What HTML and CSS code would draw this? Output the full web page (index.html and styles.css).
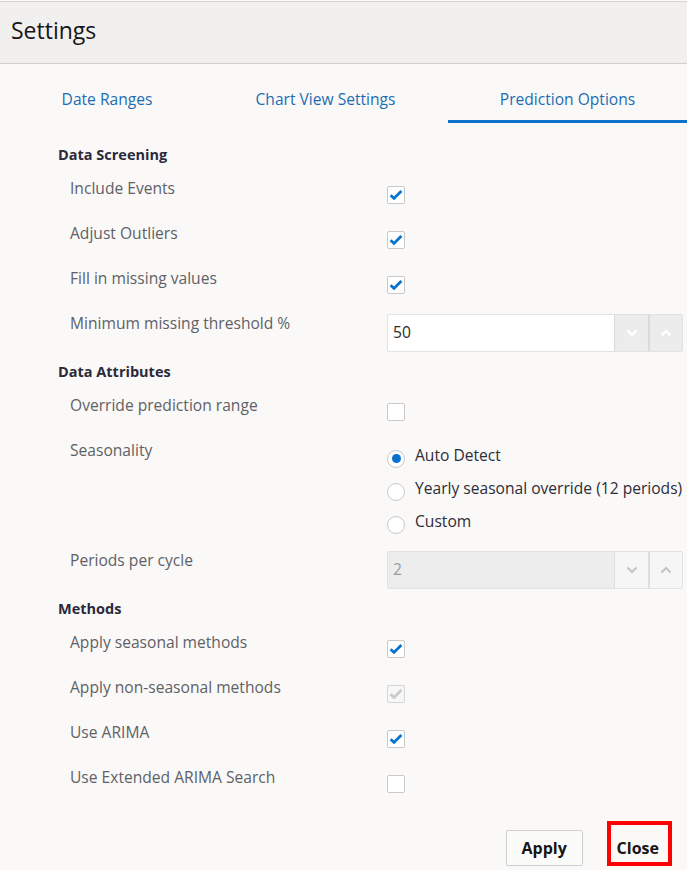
FILE: index.html
```html
<!DOCTYPE html>
<html lang="en">
<head>
<meta charset="utf-8">
<title>Settings</title>
<link rel="stylesheet" href="styles.css">
</head>
<body>
<div class="dialog">
  <header class="titlebar"><h1 class="title">Settings</h1></header>

  <nav class="tabs">
    <a class="tab tab-dates">Date Ranges</a>
    <a class="tab tab-chart">Chart View Settings</a>
    <a class="tab tab-pred active">Prediction Options</a>
  </nav>

  <main class="content">
    <section class="group">
      <h2 class="group-title">Data Screening</h2>
      <div class="row">
        <span class="label">Include Events</span>
        <span class="cb"><svg viewBox="0 0 16 16"><path d="M2.6 8.2 L6 11.4 L13.4 4"/></svg></span>
      </div>
      <div class="row">
        <span class="label">Adjust Outliers</span>
        <span class="cb"><svg viewBox="0 0 16 16"><path d="M2.6 8.2 L6 11.4 L13.4 4"/></svg></span>
      </div>
      <div class="row">
        <span class="label">Fill in missing values</span>
        <span class="cb"><svg viewBox="0 0 16 16"><path d="M2.6 8.2 L6 11.4 L13.4 4"/></svg></span>
      </div>
      <div class="row row-input">
        <span class="label">Minimum missing threshold %</span>
        <div class="spin">
          <span class="spin-value">50</span>
          <span class="spin-btn"><svg viewBox="0 0 12 8"><path d="M1.5 1.5 L6 6 L10.5 1.5"/></svg></span>
          <span class="spin-btn"><svg viewBox="0 0 12 8"><path d="M1.5 6.5 L6 2 L10.5 6.5"/></svg></span>
        </div>
      </div>
    </section>

    <section class="group">
      <h2 class="group-title">Data Attributes</h2>
      <div class="row">
        <span class="label">Override prediction range</span>
        <span class="cb"></span>
      </div>
      <div class="row row-radios">
        <span class="label">Seasonality</span>
        <div class="radios">
          <div class="radio-item"><span class="radio selected"></span><span class="radio-text">Auto Detect</span></div>
          <div class="radio-item"><span class="radio"></span><span class="radio-text">Yearly seasonal override (12 periods)</span></div>
          <div class="radio-item"><span class="radio"></span><span class="radio-text">Custom</span></div>
        </div>
      </div>
      <div class="row row-input">
        <span class="label">Periods per cycle</span>
        <div class="spin disabled">
          <span class="spin-value">2</span>
          <span class="spin-btn"><svg viewBox="0 0 12 8"><path d="M1.5 1.5 L6 6 L10.5 1.5"/></svg></span>
          <span class="spin-btn"><svg viewBox="0 0 12 8"><path d="M1.5 6.5 L6 2 L10.5 6.5"/></svg></span>
        </div>
      </div>
    </section>

    <section class="group">
      <h2 class="group-title">Methods</h2>
      <div class="row">
        <span class="label">Apply seasonal methods</span>
        <span class="cb"><svg viewBox="0 0 16 16"><path d="M2.6 8.2 L6 11.4 L13.4 4"/></svg></span>
      </div>
      <div class="row">
        <span class="label">Apply non-seasonal methods</span>
        <span class="cb disabled"><svg viewBox="0 0 16 16"><path d="M2.6 8.2 L6 11.4 L13.4 4"/></svg></span>
      </div>
      <div class="row">
        <span class="label">Use ARIMA</span>
        <span class="cb"><svg viewBox="0 0 16 16"><path d="M2.6 8.2 L6 11.4 L13.4 4"/></svg></span>
      </div>
      <div class="row">
        <span class="label">Use Extended ARIMA Search</span>
        <span class="cb"></span>
      </div>
    </section>
  </main>

  <footer class="footer">
    <button class="btn btn-apply">Apply</button>
    <button class="btn btn-close">Close<span class="highlight"></span></button>
  </footer>
</div>
</body>
</html>
```

FILE: styles.css
```css
* { box-sizing: border-box; }

html, body {
  margin: 0;
  padding: 0;
  background: #faf9f8;
}

body {
  font-family: "Open Sans", "Noto Sans", sans-serif;
  color: #5f6064;
}

.dialog {
  width: 687px;
  height: 870px;
  overflow: hidden;
  background: #faf9f8;
}

.titlebar {
  margin-top: 1px;
  height: 63px;
  background: #f1f0ef;
  border-top: 1px solid #d3d3d3;
  border-bottom: 1px solid #d0d0d0;
  padding: 13px 0 0 11px;
}

.title {
  margin: 0;
  font-size: 23px;
  font-weight: 400;
  color: #161616;
  line-height: 30px;
}

.tabs {
  display: flex;
  padding-left: 7px;
  padding-top: 24px;
}

.tab {
  display: block;
  text-align: center;
  font-size: 15.6px;
  line-height: 22px;
  color: #1d6cb3;
  padding-bottom: 10px;
  border-bottom: 3px solid transparent;
  white-space: nowrap;
}

.tab-dates { width: 200px; }
.tab-chart { width: 237px; margin-right: 4px; }
.tab-pred { width: 239px; }

.tab.active { border-bottom-color: #0b74c8; }

.content {
  padding: 22px 4px 0 58px;
}

.group-title {
  margin: 0 0 13px 0;
  font-size: 14.5px;
  line-height: 20px;
  font-weight: 700;
  color: #2a2a3a;
}

.row {
  display: grid;
  grid-template-columns: 317px 1fr;
  align-items: start;
  height: 45px;
  padding-left: 12px;
}

.row-input {
  height: auto;
  margin-bottom: 10px;
}

.row-radios {
  height: 110px;
}

.label {
  font-size: 15.6px;
  line-height: 20px;
  color: #606166;
  white-space: nowrap;
}

.cb {
  width: 18px;
  height: 18px;
  margin-top: 8px;
  border: 1px solid #c9c9c9;
  border-radius: 2px;
  background: #ffffff;
  display: flex;
}

.cb svg {
  width: 16px;
  height: 16px;
  fill: none;
  stroke: #0572ce;
  stroke-width: 2.8;
}

.cb.disabled { background: #f7f7f7; border-color: #d6d6d6; }
.cb.disabled svg { stroke: #c9c9c9; }

.spin {
  margin-top: 1px;
  height: 38px;
  display: flex;
  border: 1px solid #e2e2e2;
  border-radius: 2px;
  background: #ffffff;
}

.spin-value {
  flex: 1;
  padding-left: 5px;
  font-size: 15.6px;
  line-height: 35px;
  color: #2b2b2b;
}

.spin-btn {
  width: 34px;
  display: flex;
  align-items: center;
  justify-content: center;
  background: #ececec;
  border-left: 1px solid #dadada;
}

.spin-btn + .spin-btn { border-left: 2px solid #dadada; }

.spin-btn svg {
  width: 12px;
  height: 8px;
  fill: none;
  stroke: #ffffff;
  stroke-width: 2.4;
}

.spin.disabled { background: #ededed; }
.spin.disabled .spin-value { color: #9b9b9b; }
.spin.disabled .spin-btn { background: #f6f6f6; border-left-color: #dedede; }
.spin.disabled .spin-btn svg { stroke: #c3c3c3; stroke-width: 2; }

.radios {
  margin-top: 2px;
  display: flex;
  flex-direction: column;
}

.radio-item {
  height: 33px;
  display: flex;
  align-items: center;
  gap: 10px;
}

.radio {
  width: 18px;
  height: 18px;
  border-radius: 50%;
  border: 1px solid #c9c9c9;
  background: #ffffff;
  display: flex;
  align-items: center;
  justify-content: center;
  flex: none;
}

.radio.selected::after {
  content: "";
  width: 9px;
  height: 9px;
  border-radius: 50%;
  background: #0572ce;
}

.radio-text {
  font-size: 15.6px;
  line-height: 20px;
  color: #2d2d38;
  white-space: nowrap;
  margin-top: -7px;
}

.footer {
  display: flex;
  justify-content: flex-end;
  align-items: center;
  gap: 24px;
  padding: 18px 18px 0 0;
}

.btn {
  font-family: "Open Sans", "Noto Sans", sans-serif;
  font-size: 16px;
  font-weight: 700;
  color: #161616;
  height: 36px;
  border-radius: 2px;
  cursor: pointer;
}

.btn-apply {
  width: 77px;
  border: 1px solid #d0d0d0;
  background: #fbfbfa;
  padding: 0;
}

.btn-close {
  position: relative;
  padding: 0 9px;
  border: 1px solid transparent;
  background: transparent;
}

.highlight {
  position: absolute;
  left: -1px;
  top: -10px;
  width: 65px;
  height: 45px;
  border: 4px solid #ff0000;
}
```
